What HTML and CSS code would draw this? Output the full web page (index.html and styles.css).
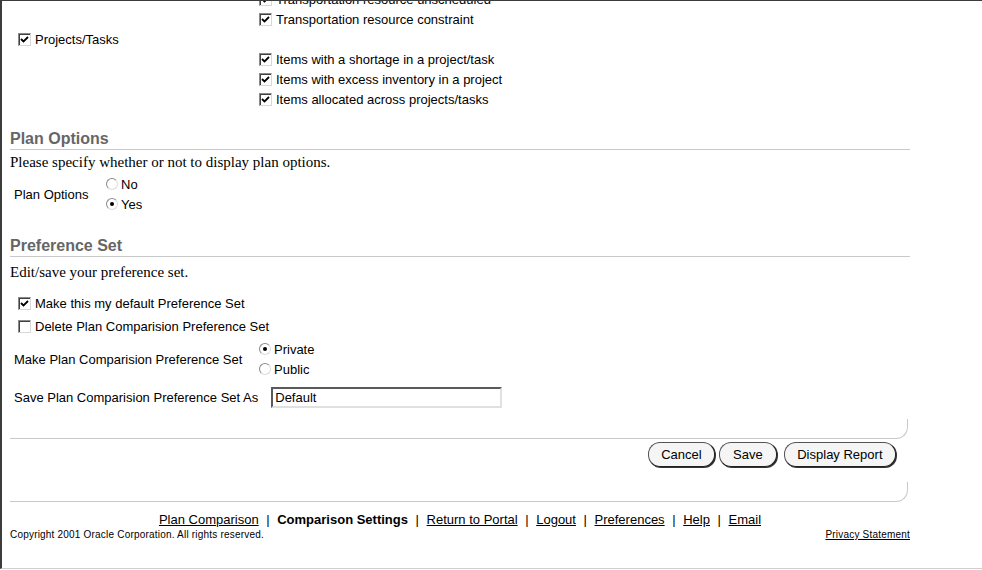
FILE: index.html
```html
<!DOCTYPE html>
<html>
<head>
<meta charset="utf-8">
<link rel="stylesheet" href="styles.css">
</head>
<body>
<div class="frame">
  <div class="opts">
    <div class="cell"></div>
    <div class="cell"><span class="cb on"><svg viewBox="0 0 11 11"><path d="M2 5 L4.5 7.5 L9 3"/></svg></span><span>Transportation resource unscheduled</span></div>
    <div class="cell"></div>
    <div class="cell"><span class="cb on"><svg viewBox="0 0 11 11"><path d="M2 5 L4.5 7.5 L9 3"/></svg></span><span>Transportation resource constraint</span></div>
    <div class="cell left"><span class="cb on"><svg viewBox="0 0 11 11"><path d="M2 5 L4.5 7.5 L9 3"/></svg></span><span>Projects/Tasks</span></div>
    <div class="cell"></div>
    <div class="cell"></div>
    <div class="cell"><span class="cb on"><svg viewBox="0 0 11 11"><path d="M2 5 L4.5 7.5 L9 3"/></svg></span><span>Items with a shortage in a project/task</span></div>
    <div class="cell"></div>
    <div class="cell"><span class="cb on"><svg viewBox="0 0 11 11"><path d="M2 5 L4.5 7.5 L9 3"/></svg></span><span>Items with excess inventory in a project</span></div>
    <div class="cell"></div>
    <div class="cell"><span class="cb on"><svg viewBox="0 0 11 11"><path d="M2 5 L4.5 7.5 L9 3"/></svg></span><span>Items allocated across projects/tasks</span></div>
  </div>

  <h2 class="hdr hdr1">Plan Options</h2>
  <p class="desc desc1">Please specify whether or not to display plan options.</p>
  <div class="field plan-field">
    <span class="flabel plan-label">Plan Options</span>
    <div class="radios">
      <div class="rrow"><span class="rb"></span><span>No</span></div>
      <div class="rrow"><span class="rb on"></span><span>Yes</span></div>
    </div>
  </div>

  <h2 class="hdr hdr2">Preference Set</h2>
  <p class="desc desc2">Edit/save your preference set.</p>
  <div class="crow first"><span class="cb on"><svg viewBox="0 0 11 11"><path d="M2 5 L4.5 7.5 L9 3"/></svg></span><span>Make this my default Preference Set</span></div>
  <div class="crow"><span class="cb"></span><span>Delete Plan Comparision Preference Set</span></div>
  <div class="field make-field">
    <span class="flabel make-label">Make Plan Comparision Preference Set</span>
    <div class="radios">
      <div class="rrow"><span class="rb on"></span><span>Private</span></div>
      <div class="rrow"><span class="rb"></span><span>Public</span></div>
    </div>
  </div>
  <div class="field save-field">
    <span class="flabel save-label">Save Plan Comparision Preference Set As</span>
    <input class="txt" type="text" value="Default">
  </div>

  <div class="sep sep1"></div>
  <div class="buttons">
    <button class="btn">Cancel</button>
    <button class="btn btn-save">Save</button>
    <button class="btn">Display Report</button>
  </div>
  <div class="sep sep2"></div>

  <div class="links">
    <a href="#">Plan Comparison</a><span class="bar">|</span><b>Comparison Settings</b><span class="bar">|</span><a href="#">Return to Portal</a><span class="bar">|</span><a href="#">Logout</a><span class="bar">|</span><a href="#">Preferences</a><span class="bar">|</span><a href="#">Help</a><span class="bar">|</span><a href="#">Email</a>
  </div>
  <div class="bottom">
    <span class="copy">Copyright 2001 Oracle Corporation. All rights reserved.</span>
    <a href="#" class="privacy">Privacy Statement</a>
  </div>
</div>
</body>
</html>
```

FILE: styles.css
```css
html, body {
  margin: 0;
  padding: 0;
  background: #fff;
}
body {
  font-family: "Liberation Sans", Arial, sans-serif;
  font-size: 13px;
  color: #000;
}
.frame {
  box-sizing: border-box;
  width: 982px;
  height: 569px;
  border-top: 1px solid #3c3c3c;
  border-left: 2px solid #3c3c3c;
  border-bottom: 1px solid #d0d0d0;
  overflow: hidden;
}

/* top option grid */
.opts {
  display: grid;
  grid-template-columns: 257px 1fr;
  grid-auto-rows: 20px;
  margin-top: -12px;
}
.cell {
  display: flex;
  align-items: center;
  gap: 4px;
  white-space: nowrap;
}
.cell.left {
  padding-left: 16px;
}

/* checkbox */
.cb {
  box-sizing: border-box;
  width: 13px;
  height: 13px;
  flex: none;
  background: #fff;
  border: 1px solid;
  border-color: #8a8a8a #d8d8d8 #d8d8d8 #8a8a8a;
  box-shadow: inset 1px 1px 0 #404040;
  display: inline-flex;
  align-items: center;
  justify-content: center;
}
.cb svg {
  width: 11px;
  height: 11px;
  display: none;
}
.cb.on svg {
  display: block;
}
.cb svg path {
  fill: none;
  stroke: #000;
  stroke-width: 1.8;
}

/* headers */
.hdr {
  margin: 0 72px 0 8px;
  font-size: 16px;
  line-height: 20px;
  font-weight: bold;
  color: #666;
  border-bottom: 1px solid #c8c8c8;
}
.hdr1 { margin-top: 20px; }
.hdr2 { margin-top: 22px; }

.desc {
  margin: 0 0 0 8px;
  font-family: "Liberation Serif", "Times New Roman", serif;
  font-size: 15px;
  line-height: 16px;
}
.desc1 { margin-top: 4px; }
.desc2 { margin-top: 7px; }

/* fields */
.field {
  display: flex;
  align-items: center;
  margin-left: 12px;
}
.plan-field { margin-top: 4px; }
.plan-label { width: 92px; flex: none; }
.make-field { margin-top: 3px; }
.make-label { width: 245px; flex: none; }
.save-field { margin-top: 8px; }
.save-label { margin-right: 13px; }

.radios {
  display: flex;
  flex-direction: column;
}
.rrow {
  height: 20px;
  display: flex;
  align-items: center;
  gap: 3px;
}
.rb {
  box-sizing: border-box;
  width: 12px;
  height: 12px;
  flex: none;
  border-radius: 50%;
  border: 1px solid;
  border-color: #8a8a8a #dcdcdc #dcdcdc #8a8a8a;
  background: #fff;
  position: relative;
}
.rb.on::after {
  content: "";
  position: absolute;
  left: 3px;
  top: 3px;
  width: 4px;
  height: 4px;
  border-radius: 50%;
  background: #000;
}

.crow {
  height: 20px;
  display: flex;
  align-items: center;
  gap: 4px;
  padding-left: 16px;
  margin-top: 3px;
}
.crow.first { margin-top: 13px; }

.txt {
  box-sizing: border-box;
  width: 231px;
  height: 21px;
  margin: 0;
  padding: 0 2px;
  font-family: "Liberation Sans", Arial, sans-serif;
  font-size: 13px;
  color: #000;
  background: #fff;
  border: 2px solid;
  border-color: #5a5a5a #e0e0e0 #e0e0e0 #5a5a5a;
  outline: none;
}

/* separators with rounded right end */
.sep {
  box-sizing: border-box;
  height: 20px;
  margin-left: 8px;
  width: 898px;
  border-bottom: 1px solid #c8c8c8;
  border-right: 1px solid #c8c8c8;
  border-bottom-right-radius: 12px;
}
.sep1 { margin-top: 11px; }
.sep2 { margin-top: 15px; }

.buttons {
  display: flex;
  justify-content: flex-end;
  gap: 4px;
  padding-right: 86px;
  margin-top: 3px;
}
.btn {
  box-sizing: border-box;
  height: 25px;
  padding: 0 12.5px;
  font-family: "Liberation Sans", Arial, sans-serif;
  font-size: 13px;
  color: #000;
  background: #f5f5f5;
  border: 1px solid #555;
  border-right-color: #222;
  border-bottom-color: #222;
  box-shadow: 1px 1px 0 #333;
  border-radius: 12px;
}
.btn-save {
  padding: 0 13px;
  margin-right: 3px;
}

.links {
  margin: 10px 72px 0 8px;
  text-align: center;
  line-height: 16px;
  font-size: 13px;
  white-space: nowrap;
}
.links a {
  color: #000;
  text-decoration: underline;
}
.links b {
  font-weight: bold;
}
.bar {
  margin: 0 7.6px;
}

.bottom {
  display: flex;
  justify-content: space-between;
  margin: 0 72px 0 8px;
  font-size: 10px;
  line-height: 13px;
  letter-spacing: 0.2px;
}
.privacy {
  color: #000;
  text-decoration: underline;
}
```
